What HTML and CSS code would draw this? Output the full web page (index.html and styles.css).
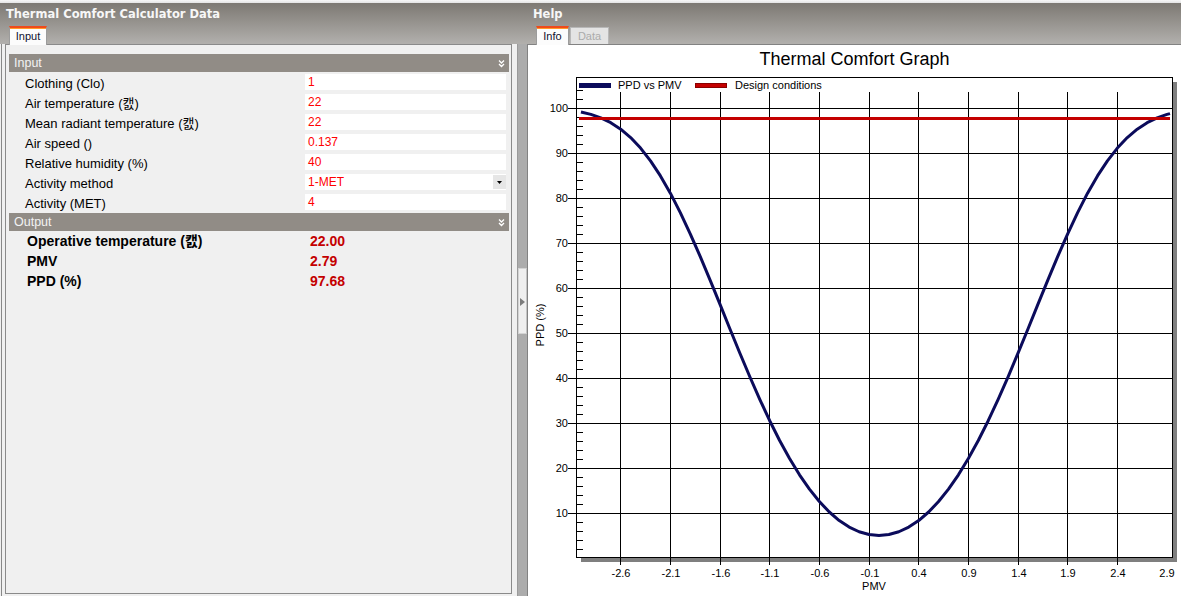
FILE: index.html
```html
<!DOCTYPE html>
<html>
<head>
<meta charset="utf-8">
<title>Thermal Comfort Calculator</title>
<link rel="stylesheet" href="styles.css">
</head>
<body>
<div class="topstrip"></div>
<div class="app">
  <header class="head head-left">
    <div class="head-title">Thermal Comfort Calculator Data</div>
    <div class="tabs"><div class="tab tab-active tab-input">Input</div></div>
  </header>
  <header class="head head-right">
    <div class="head-title">Help</div>
    <div class="tabs">
      <div class="tab tab-active tab-info">Info</div>
      <div class="tab tab-off tab-data">Data</div>
    </div>
  </header>

  <div class="left-body">
    <div class="grid-box">
      <div class="group-bar">
        <span>Input</span>
        <svg class="chev" width="7" height="9" viewBox="0 0 7 9"><path d="M1 1.5L3.5 4L6 1.5M1 5L3.5 7.5L6 5" fill="none" stroke="#fff" stroke-width="1.3"/></svg>
      </div>
      <div class="prop"><span class="prop-label">Clothing (Clo)</span><span class="prop-field">1</span></div>
      <div class="prop"><span class="prop-label">Air temperature (캜)</span><span class="prop-field">22</span></div>
      <div class="prop"><span class="prop-label">Mean radiant temperature (캜)</span><span class="prop-field">22</span></div>
      <div class="prop"><span class="prop-label">Air speed ()</span><span class="prop-field">0.137</span></div>
      <div class="prop"><span class="prop-label">Relative humidity (%)</span><span class="prop-field">40</span></div>
      <div class="prop"><span class="prop-label">Activity method</span><span class="prop-field prop-select"><span class="sel-text">1-MET</span><span class="drop"><svg width="5" height="3" viewBox="0 0 5 3"><path d="M0 0H5L2.5 3Z" fill="#000"/></svg></span></span></div>
      <div class="prop"><span class="prop-label">Activity (MET)</span><span class="prop-field">4</span></div>

      <div class="group-bar group-out">
        <span>Output</span>
        <svg class="chev" width="7" height="9" viewBox="0 0 7 9"><path d="M1 1.5L3.5 4L6 1.5M1 5L3.5 7.5L6 5" fill="none" stroke="#fff" stroke-width="1.3"/></svg>
      </div>
      <div class="out"><span class="out-label">Operative temperature (캜)</span><span class="out-val">22.00</span></div>
      <div class="out"><span class="out-label">PMV</span><span class="out-val">2.79</span></div>
      <div class="out"><span class="out-label">PPD (%)</span><span class="out-val">97.68</span></div>
    </div>
  </div>

  <div class="splitter">
    <div class="split-btn"><svg width="5" height="8" viewBox="0 0 5 8"><path d="M0 0L5 4L0 8Z" fill="#7c7c7c"/></svg></div>
  </div>

  <div class="right-body">
    <div class="graph-title">Thermal Comfort Graph</div>
    <svg class="chart" width="653" height="525" viewBox="528 71 653 525">
      <rect x="581" y="82" width="596" height="480" fill="#7f7f7f"/>
      <rect x="576.5" y="77.5" width="596" height="480" fill="#fff" stroke="#000"/>

      <g class="legend">
        <rect x="579" y="83" width="32" height="5" fill="#0b0b5b"/>
        <text x="618" y="89">PPD vs PMV</text>
        <rect x="695.5" y="83.5" width="31" height="4" fill="#c40000" stroke="#8a0000"/>
        <text x="735" y="89">Design conditions</text>
      </g>

      <path stroke="#000" stroke-width="1" fill="none" d="M568 108.5H1172M568 153.5H1172M568 198.5H1172M568 243.5H1172M568 288.5H1172M568 333.5H1172M568 378.5H1172M568 423.5H1172M568 468.5H1172M568 513.5H1172"/>

      <path stroke="#000" stroke-width="1" fill="none" d="M576 549.5H583M576 540.5H583M576 531.5H583M576 522.5H583M576 504.5H583M576 495.5H583M576 486.5H583M576 477.5H583M576 459.5H583M576 450.5H583M576 441.5H583M576 432.5H583M576 414.5H583M576 405.5H583M576 396.5H583M576 387.5H583M576 369.5H583M576 360.5H583M576 351.5H583M576 342.5H583M576 324.5H583M576 315.5H583M576 306.5H583M576 297.5H583M576 279.5H583M576 270.5H583M576 261.5H583M576 252.5H583M576 234.5H583M576 225.5H583M576 216.5H583M576 207.5H583M576 189.5H583M576 180.5H583M576 171.5H583M576 162.5H583M576 144.5H583M576 135.5H583M576 126.5H583M576 117.5H583M576 99.5H583M576 90.5H583"/>

      <path stroke="#000" stroke-width="1" fill="none" d="M620.5 92V565M670.5 92V565M720.5 92V565M769.5 92V565M819.5 92V565M869.5 92V565M918.5 92V565M968.5 92V565M1018.5 92V565M1067.5 92V565M1117.5 92V565"/>

      <g class="ylabels">
        <text x="568" y="112">100</text>
        <text x="568" y="157">90</text>
        <text x="568" y="202">80</text>
        <text x="568" y="247">70</text>
        <text x="568" y="292">60</text>
        <text x="568" y="337">50</text>
        <text x="568" y="382">40</text>
        <text x="568" y="427">30</text>
        <text x="568" y="472">20</text>
        <text x="568" y="517">10</text>
      </g>
      <g class="xlabels">
        <text x="621" y="577">-2.6</text>
        <text x="671" y="577">-2.1</text>
        <text x="721" y="577">-1.6</text>
        <text x="770" y="577">-1.1</text>
        <text x="820" y="577">-0.6</text>
        <text x="870" y="577">-0.1</text>
        <text x="919" y="577">0.4</text>
        <text x="969" y="577">0.9</text>
        <text x="1019" y="577">1.4</text>
        <text x="1068" y="577">1.9</text>
        <text x="1118" y="577">2.4</text>
        <text x="1167" y="577">2.9</text>
      </g>
      <text class="axis-title" x="874" y="590">PMV</text>
      <text class="axis-title" transform="translate(544 325) rotate(-90)">PPD (%)</text>

      <g transform="matrix(99.33 0 0 -4.5 878.96 558)">
        <polyline fill="none" stroke="#0b0b5b" stroke-width="3" stroke-linejoin="round" vector-effect="non-scaling-stroke" points="-3,99.12 -2.9,98.58 -2.8,97.81 -2.7,96.73 -2.6,95.29 -2.5,93.43 -2.4,91.10 -2.3,88.26 -2.2,84.91 -2.1,81.07 -2,76.76 -1.9,72.05 -1.8,67.02 -1.7,61.75 -1.6,56.35 -1.5,50.90 -1.4,45.51 -1.3,40.27 -1.2,35.25 -1.1,30.51 -1,26.12 -0.9,22.10 -0.8,18.49 -0.7,15.30 -0.6,12.55 -0.5,10.22 -0.4,8.33 -0.3,6.87 -0.2,5.83 -0.1,5.21 0,5 0.1,5.21 0.2,5.83 0.3,6.87 0.4,8.33 0.5,10.22 0.6,12.55 0.7,15.30 0.8,18.49 0.9,22.10 1,26.12 1.1,30.51 1.2,35.25 1.3,40.27 1.4,45.51 1.5,50.90 1.6,56.35 1.7,61.75 1.8,67.02 1.9,72.05 2,76.76 2.1,81.07 2.2,84.91 2.3,88.26 2.4,91.10 2.5,93.43 2.6,95.29 2.7,96.73 2.8,97.81 2.9,98.58 2.93,98.76"/>
      </g>
      <path d="M579 118.5H1170" stroke="#c40000" stroke-width="3" fill="none"/>
    </svg>
  </div>
</div>
</body>
</html>
```
FILE: styles.css
```css
* { box-sizing: border-box; }
html, body { margin: 0; padding: 0; }
body {
  width: 1181px;
  height: 596px;
  overflow: hidden;
  background: #f0f0f0;
  font-family: "Liberation Sans", "Noto Sans CJK KR", sans-serif;
}
.topstrip {
  height: 3px;
  background: linear-gradient(#f8f8f8, #e4e4e4);
}
.app {
  display: grid;
  grid-template-columns: 517px 10px 654px;
  grid-template-rows: 41px 552px;
}
.head {
  background: linear-gradient(#7d7973, #b2b0ad);
  display: flex;
  flex-direction: column;
  padding-left: 6px;
}
.head-left { grid-column: 1 / 3; grid-row: 1; }
.head-right { grid-column: 3; grid-row: 1; }
.head-title {
  font-family: "DejaVu Sans", sans-serif;
  font-weight: bold;
  font-size: 11.5px;
  line-height: 14px;
  color: #f7f7f7;
  height: 23px;
  padding-top: 4px;
}
.tabs {
  display: flex;
  align-items: flex-start;
  gap: 1px;
  margin-left: 3px;
  height: 18px;
}
.tab {
  font-size: 11px;
  line-height: 16px;
  text-align: center;
  border: 1px solid #9c9c9c;
  border-bottom: none;
}
.tab-active {
  position: relative;
  z-index: 1;
  height: 19px;
  margin-bottom: -1px;
  background: #fcfcfc;
  color: #10102e;
  border-top: 2px solid #ee4a1c;
  box-shadow: inset 0 1px 0 #ff9a2a;
}
.tab-input { width: 38px; }
.tab-info { width: 33px; }
.tab-off {
  margin-top: 1px;
  height: 17px;
  background: #e4e4e4;
  color: #ababab;
  border-color: #b8b8b8;
  line-height: 15px;
  padding-top: 1px;
}
.tab-data { width: 39px; }

.left-body {
  grid-column: 1;
  grid-row: 2;
  margin-left: 1px;
  border-left: 1px solid #888;
  padding: 0 5px 2px 3px;
  background: #f0f0f0;
}
.grid-box {
  height: 100%;
  border: 1px solid #8a8a8a;
  background: #f0f0f0;
  padding: 9px 2px 0 3px;
}
.group-bar {
  height: 18px;
  background: #918c86;
  color: #f3f3f3;
  font-size: 12.5px;
  line-height: 18px;
  padding: 0 4px 0 5px;
  display: flex;
  justify-content: space-between;
  align-items: center;
}
.chev { display: block; }
.group-out { margin-top: 1px; }
.prop {
  height: 20px;
  display: flex;
  padding: 0 3px 0 16px;
}
.prop-label {
  width: 280px;
  flex: none;
  font-size: 13px;
  line-height: 16px;
  padding-top: 4px;
  color: #000;
  white-space: nowrap;
}
.prop-field {
  flex: 1;
  height: 16px;
  margin-top: 2px;
  background: #fff;
  color: #ff0000;
  font-size: 12px;
  line-height: 15px;
  padding: 1px 0 0 3px;
}
.prop-select {
  display: flex;
  justify-content: space-between;
}
.drop {
  width: 13px;
  height: 14px;
  background: #e6e6e6;
  display: flex;
  align-items: center;
  justify-content: center;
}
.drop svg { display: block; }
.out {
  height: 20px;
  display: flex;
  padding: 1px 0 0 18px;
  font-size: 14px;
  font-weight: bold;
  line-height: 19px;
}
.out-label {
  width: 283px;
  flex: none;
  color: #000;
  white-space: nowrap;
}
.out-val { color: #c40000; }

.splitter {
  grid-column: 2;
  grid-row: 2;
  background: #acacac;
  border-left: 1px solid #9a9a9a;
  padding-top: 224px;
}
.split-btn {
  width: 9px;
  height: 66px;
  background: #efefef;
  border: 1px solid #d4d4d4;
  border-right-color: #c4c4c4;
  display: flex;
  align-items: center;
  justify-content: center;
  padding-top: 2px;
}
.split-btn svg { display: block; }

.right-body {
  grid-column: 3;
  grid-row: 2;
  background: #fff;
  border-left: 1px solid #828282;
  border-top: 1px solid #828282;
}
.graph-title {
  height: 26px;
  padding-top: 2px;
  font-size: 18px;
  line-height: 24px;
  text-align: center;
  color: #000;
}
.chart {
  display: block;
  font-family: "Liberation Sans", sans-serif;
  font-size: 11px;
}
.chart text { fill: #000; }
.ylabels text { text-anchor: end; }
.xlabels text { text-anchor: middle; }
.axis-title { text-anchor: middle; }
```
